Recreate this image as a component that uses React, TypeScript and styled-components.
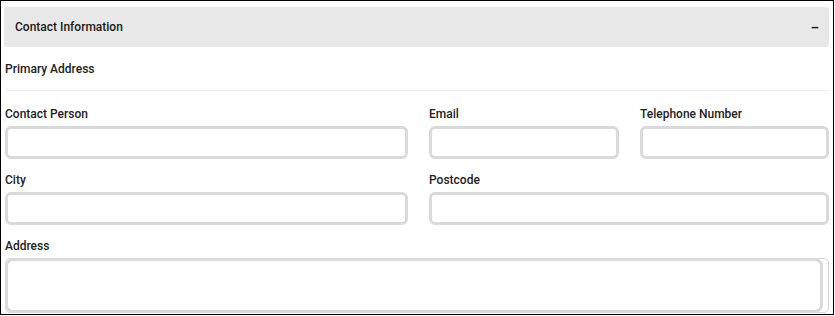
import React from "react";
import styled, { createGlobalStyle } from "styled-components";

const Global = createGlobalStyle`
  html, body { margin: 0; padding: 0; background: #fff; }
  body { font-family: Roboto, "Liberation Sans", sans-serif; color: #222; }
  * { box-sizing: border-box; }
`;

const Frame = styled.div`
  width: 834px;
  height: 315px;
  border: 1px solid #000;
  overflow: hidden;
  padding: 6px 4px 0 3px;
`;

const Header = styled.div`
  height: 40px;
  background: #e8e8e8;
  border-radius: 3px;
  display: flex;
  align-items: center;
  justify-content: space-between;
  padding: 0 10px 0 11px;
  font-size: 12px;
  font-weight: 500;
  color: #1a1a1a;
`;

const Toggle = styled.span`
  font-size: 13px;
  font-weight: 700;
`;

const SectionTitle = styled.div`
  font-size: 12px;
  font-weight: 500;
  height: 44px;
  display: flex;
  align-items: center;
  border-bottom: 1px solid #efefef;
  margin-left: 1px;
`;

const Grid = styled.div`
  display: grid;
  grid-template-columns: 403px 190px 189px;
  column-gap: 21px;
  row-gap: 13px;
  padding: 15px 0 0 1px;
`;

const Field = styled.div<{ $span?: number }>`
  grid-column: span ${(p) => p.$span ?? 1};
  display: flex;
  flex-direction: column;
`;

const Label = styled.label`
  font-size: 12px;
  font-weight: 500;
  line-height: 16px;
  margin-bottom: 4px;
  color: #222;
`;

const Input = styled.input`
  height: 33px;
  border: 3px solid #dadada;
  border-radius: 6px;
  background: #fff;
  outline: none;
  padding: 0 8px;
`;

const AreaWrap = styled.div`
  border: 1px solid #d6d6d6;
  border-radius: 5px;
  padding: 0 5px 0 0;
  height: 55px;
  display: flex;
`;

const TextArea = styled.textarea`
  flex: 1;
  border: 3px solid #dadada;
  border-radius: 8px;
  resize: none;
  outline: none;
  background: #fff;
  margin: -1px 0 -1px -1px;
`;

export default function App() {
  return (
    <>
      <Global />
      <Frame>
        <Header>
          <span>Contact Information</span>
          <Toggle>–</Toggle>
        </Header>
        <SectionTitle>Primary Address</SectionTitle>
        <Grid>
          <Field>
            <Label>Contact Person</Label>
            <Input />
          </Field>
          <Field>
            <Label>Email</Label>
            <Input />
          </Field>
          <Field>
            <Label>Telephone Number</Label>
            <Input />
          </Field>
          <Field>
            <Label>City</Label>
            <Input />
          </Field>
          <Field $span={2}>
            <Label>Postcode</Label>
            <Input />
          </Field>
          <Field $span={3}>
            <Label>Address</Label>
            <AreaWrap>
              <TextArea />
            </AreaWrap>
          </Field>
        </Grid>
      </Frame>
    </>
  );
}
